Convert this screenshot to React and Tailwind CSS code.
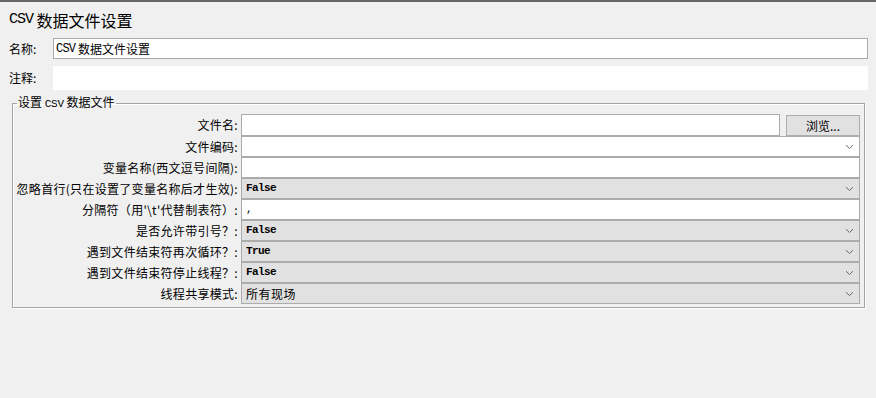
import React from "react";

function Chevron() {
  return (
    <svg width="9" height="6" viewBox="0 0 9 6" className="shrink-0">
      <path d="M1 1.2 L4.5 4.5 L8 1.2" fill="none" stroke="#6a6a6a" strokeWidth="1" />
    </svg>
  );
}

function Row({ label, children, h = "h-[21px]" }) {
  return (
    <div className={`flex ${h} items-stretch`}>
      <div className="w-[228px] shrink-0 flex items-center justify-end pr-[3px] text-[12px] tracking-[0.3px] leading-none whitespace-nowrap">
        {label}
      </div>
      <div className="flex-1 flex items-stretch min-w-0">{children}</div>
    </div>
  );
}

function Combo({ value, mono = true, gray = true }) {
  return (
    <div
      className={`flex-1 flex items-center justify-between border border-[#ababab] pl-[4px] pr-[5px] ${gray ? "bg-[#e1e1e1]" : "bg-white"}`}
    >
      {mono ? (
        <span className="font-['Liberation_Mono',monospace] font-bold text-[11px] tracking-[-0.6px] leading-none">{value}</span>
      ) : (
        <span className="text-[12px] tracking-[0.5px] leading-none">{value}</span>
      )}
      <Chevron />
    </div>
  );
}

function TextBox({ value }) {
  return (
    <div className="flex-1 flex items-center border border-[#ababab] bg-white pl-[4px] text-[11px] leading-none">
      <span className="font-['Liberation_Mono',monospace]">{value}</span>
    </div>
  );
}

export default function App() {
  return (
    <div className="w-[876px] h-[398px] bg-[#f0f0f0] border-t-2 border-[#666666] text-black font-['Noto_Sans_CJK_SC','Noto_Sans',sans-serif] overflow-hidden">
      <div className="h-[36px] flex items-center pl-[9px] whitespace-nowrap">
        <span className="font-['Liberation_Mono',monospace] text-[15px] tracking-[-1px] leading-[20px]">CSV</span>
        <span className="text-[16px] leading-[20px]">&nbsp;数据文件设置</span>
      </div>

      <div className="flex h-[21px] items-stretch pr-[8px]">
        <div className="w-[53px] shrink-0 pl-[9px] flex items-center text-[12px] leading-none">名称:</div>
        <div className="flex-1 flex items-center border border-[#ababab] bg-white pl-[2px] text-[12px] leading-none whitespace-nowrap">
          <span className="font-['Liberation_Mono',monospace] text-[12px] tracking-[-0.8px]">CSV</span>
          <span>&nbsp;数据文件设置</span>
        </div>
      </div>

      <div className="flex h-[24px] items-stretch pr-[8px] mt-[7px]">
        <div className="w-[53px] shrink-0 pl-[9px] flex items-center text-[12px] leading-none">注释:</div>
        <div className="flex-1 bg-white" />
      </div>

      <fieldset className="ml-[12px] w-[853px] mt-[5px] border border-[#a5a5a5] shadow-[inset_1px_1px_0_#ffffff,1px_1px_0_#ffffff] pb-[3px] pr-[4px]">
        <legend className="ml-[4px] px-[1px] text-[12px] leading-[14px] whitespace-nowrap">
          设置 <span className="font-['Liberation_Mono',monospace] text-[11px] tracking-[-0.2px]">CSV</span> 数据文件
        </legend>
        <div className="mt-[3px] flex flex-col">
          <Row label="文件名:" h="h-[22px]">
            <div className="flex-1 border border-[#ababab] bg-white" />
            <div className="w-[74px] ml-[6px] mt-[1px] border border-[#adadad] bg-[#e1e1e1] flex items-center justify-center text-[12px] leading-none">
              浏览...
            </div>
          </Row>
          <Row label="文件编码:">
            <Combo value="" gray={false} />
          </Row>
          <Row label="变量名称(西文逗号间隔):">
            <TextBox value="" />
          </Row>
          <Row label="忽略首行(只在设置了变量名称后才生效):">
            <Combo value="False" />
          </Row>
          <Row label="分隔符（用'\t'代替制表符）:">
            <TextBox value="," />
          </Row>
          <Row label="是否允许带引号？:">
            <Combo value="False" />
          </Row>
          <Row label="遇到文件结束符再次循环？:">
            <Combo value="True" />
          </Row>
          <Row label="遇到文件结束符停止线程？:">
            <Combo value="False" />
          </Row>
          <Row label="线程共享模式:">
            <Combo value="所有现场" mono={false} />
          </Row>
        </div>
      </fieldset>
    </div>
  );
}
